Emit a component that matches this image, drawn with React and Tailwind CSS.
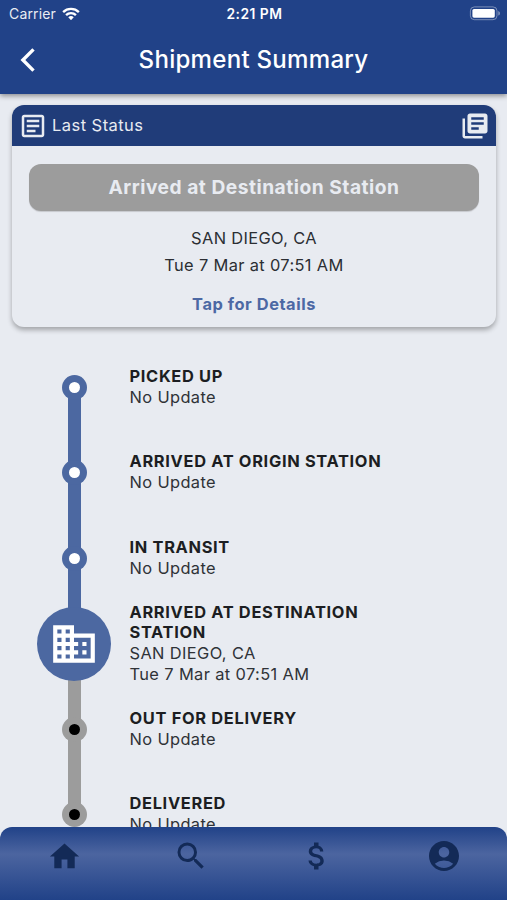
import {
  MdAccountCircle,
  MdAttachMoney,
  MdBusiness,
  MdHome,
  MdLibraryBooks,
  MdOutlineArticle,
  MdSearch,
} from "react-icons/md";

const steps = [
  { id: "picked-up", title: "PICKED UP", lines: ["No Update"], state: "done" },
  { id: "origin", title: "ARRIVED AT ORIGIN STATION", lines: ["No Update"], state: "done" },
  { id: "transit", title: "IN TRANSIT", lines: ["No Update"], state: "done" },
  {
    id: "destination",
    title: "ARRIVED AT DESTINATION STATION",
    lines: ["SAN DIEGO, CA", "Tue 7 Mar at 07:51 AM"],
    state: "current",
  },
  { id: "out", title: "OUT FOR DELIVERY", lines: ["No Update"], state: "pending" },
  { id: "delivered", title: "DELIVERED", lines: ["No Update"], state: "pending" },
];

const tabs = [
  { id: "home", icon: <MdHome size={35} className="ml-0.5" /> },
  { id: "search", icon: <MdSearch size={36} className="ml-px" /> },
  { id: "rates", icon: <MdAttachMoney size={36} /> },
  { id: "account", icon: <MdAccountCircle size={36} /> },
];

const StatusBar = () => (
  <div className="grid h-[27px] grid-cols-3 items-center pl-[9px] pr-[7px] text-[14px] text-white">
    <div className="flex items-center gap-1.5">
      <span className="tracking-[0.15px] opacity-90">Carrier</span>
      <svg width="18" height="13.5" viewBox="0 0 19 14" fill="none" stroke="white" strokeWidth="2.5">
        <path d="M1.2 5.2a12 12 0 0 1 16.6 0" />
        <path d="M4.3 8.5a7.4 7.4 0 0 1 10.4 0" />
        <path d="M9.5 13.8l-2.9-3a4.1 4.1 0 0 1 5.8 0z" fill="white" stroke="none" />
      </svg>
    </div>
    <span className="pt-px text-center text-[13.8px] font-semibold tracking-[0.5px]">2:21 PM</span>
    <svg className="justify-self-end" width="31" height="15" viewBox="0 0 31 15">
      <rect x="1.4" y="0.9" width="26.6" height="12.8" rx="4" fill="none" stroke="white" strokeOpacity="0.4" />
      <rect x="3.4" y="2.9" width="22.4" height="8.8" rx="1.6" fill="white" />
      <path d="M29.4 5v4.6c1-.4 1.4-1.3 1.4-2.3S30.4 5.4 29.4 5z" fill="white" fillOpacity="0.5" />
    </svg>
  </div>
);

const Header = () => (
  <header className="relative z-10 h-[94px] shrink-0 bg-[#214288] shadow-[0_2px_5px_rgba(0,0,0,0.4)]">
    <StatusBar />
    <div className="grid h-[66px] grid-cols-[60px_1fr_60px] items-center text-white">
      <button className="pl-5">
        <svg width="15" height="24" viewBox="0 0 15 24" fill="none" stroke="currentColor" strokeWidth="3.4">
          <path d="M13.5 1.4L2.9 12l10.6 10.6" />
        </svg>
      </button>
      <h1 className="pt-px text-center text-[24.1px] font-medium tracking-[0.25px]">Shipment Summary</h1>
    </div>
  </header>
);

const StatusCard = () => (
  <section className="mr-[11px] ml-3 mt-[11px] h-[222px] shrink-0 overflow-hidden rounded-xl bg-[#e8ebf1] shadow-[0_3px_5px_rgba(0,0,0,0.3)]">
    <div className="flex h-[41px] items-center bg-[#203c79] pl-[5.5px] pr-[6px] text-[#e8ebf1]">
      <MdOutlineArticle size={30} />
      <span className="-mt-px ml-[4.5px] flex-1 text-[16.5px] tracking-[0.45px]">Last Status</span>
      <MdLibraryBooks size={30} />
    </div>
    <div className="flex flex-col items-center px-[17px] pt-[18px] text-[16.4px] tracking-[0.35px] text-[#2b2e33]">
      <div className="flex h-[47px] w-full items-center justify-center rounded-xl bg-[#9c9c9c] text-[19.2px] font-bold tracking-[0.5px] text-[#e8ebf1] shadow-[0_1px_1px_rgba(0,0,0,0.15)]">
        Arrived at Destination Station
      </div>
      <p className="mt-[14px] leading-[27px]">SAN DIEGO, CA</p>
      <p className="leading-[27px]">Tue 7 Mar at 07:51 AM</p>
      <button className="mt-[12px] leading-[27px] font-bold tracking-[0.55px] text-[#4c68a4]">Tap for Details</button>
    </div>
  </section>
);

const StepMarker = ({ state }) => {
  if (state === "current") {
    return (
      <div className="z-10 flex size-[74px] items-center justify-center rounded-full bg-[#4c68a1] text-white">
        <MdBusiness size={50} />
      </div>
    );
  }

  return (
    <div
      className={`z-10 flex size-[25px] items-center justify-center rounded-full ${
        state === "done" ? "bg-[#4c68a1]" : "bg-[#9c9c9c]"
      }`}
    >
      <div className={`size-[11px] rounded-full ${state === "done" ? "bg-white" : "bg-black"}`} />
    </div>
  );
};

const Step = ({ step, first, last }) => {
  const topLine = first ? "bg-transparent" : step.state === "pending" ? "bg-[#9c9c9c]" : "bg-[#4c68a1]";
  const bottomLine = last ? "bg-transparent" : step.state === "done" ? "bg-[#4c68a1]" : "bg-[#9c9c9c]";

  return (
    <li className="flex h-[85.5px] shrink-0 items-center">
      <div className="flex h-full w-[129.5px] flex-col items-center pr-[18.5px] pl-[37.5px]">
        <div className={`-mb-1 w-[12.5px] flex-1 ${topLine}`} />
        <StepMarker state={step.state} />
        <div className={`-mt-1 w-[12.5px] flex-1 ${bottomLine}`} />
      </div>
      <div className="w-[270px] pb-[0.8px] text-[16.4px] leading-[20.8px] tracking-[0.38px] text-[#2f3237]">
        <h2 className="font-bold tracking-[0.68px] text-[#1c1e22]">{step.title}</h2>
        {step.lines.map((line) => (
          <p key={line}>{line}</p>
        ))}
      </div>
    </li>
  );
};

const BottomNav = () => (
  <nav className="absolute inset-x-0 bottom-0 flex h-[73px] justify-around rounded-t-xl bg-[linear-gradient(180deg,#214288_0%,#4c65a0_37%,#214288_100%)] pt-[11px] text-[#132a57]">
    {tabs.map((tab) => (
      <button key={tab.id} className="flex h-9 flex-1 items-center justify-center">
        {tab.icon}
      </button>
    ))}
  </nav>
);

export default function App() {
  return (
    <div className="relative flex h-[900px] w-[507px] flex-col overflow-hidden bg-[#e8ebf1] font-['Inter','Liberation_Sans',sans-serif]">
      <Header />
      <StatusCard />
      <ol className="mt-[17.4px] flex flex-col">
        {steps.map((step, i) => (
          <Step key={step.id} step={step} first={i === 0} last={i === steps.length - 1} />
        ))}
      </ol>
      <BottomNav />
    </div>
  );
}
